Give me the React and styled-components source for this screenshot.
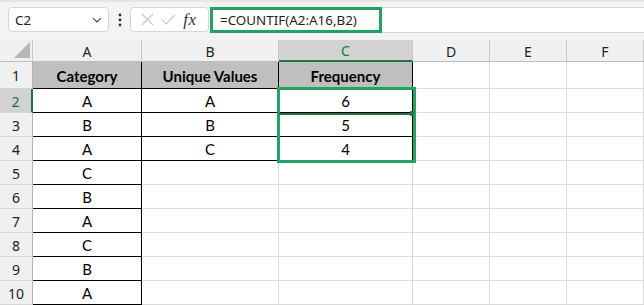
import React from "react";
import styled, { createGlobalStyle } from "styled-components";

const Global = createGlobalStyle`
  html, body { margin: 0; padding: 0; background: #ffffff; overflow: hidden; }
  * { box-sizing: border-box; }
`;

const UI_FONT = `"Noto Sans", "Open Sans", sans-serif`;
const CELL_FONT = `Lato, "Noto Sans", sans-serif`;
const GREEN = "#21a366";
const DARK_GREEN = "#217346";
const GRID = "#dadada";
const BLACK = "#000000";

const Page = styled.div`
  width: 644px;
  height: 305px;
  overflow: hidden;
  display: flex;
  flex-direction: column;
`;

const Toolbar = styled.div`
  height: 40px;
  flex: none;
  display: flex;
  align-items: flex-start;
  padding: 5px 0 0 8px;
  background: #f3f3f3;
  border-top: 2px solid #e4e4e4;
`;

const NameBox = styled.div`
  width: 101px;
  height: 25px;
  background: #ffffff;
  border: 1px solid #d6d6d6;
  border-radius: 4px;
  display: flex;
  align-items: center;
  justify-content: space-between;
  padding: 0 5px 0 6px;
  font-family: ${UI_FONT};
  font-size: 13.4px;
  color: #1f1f1f;
`;

const DotsWrap = styled.div`
  width: 21px;
  height: 25px;
  display: flex;
  align-items: center;
  justify-content: center;
`;

const IconsBox = styled.div`
  width: 79px;
  height: 25px;
  margin-right: 1px;
  background: #ffffff;
  border: 1px solid #d6d6d6;
  border-radius: 4px;
  display: flex;
  align-items: center;
  padding-left: 6px;
`;

const IconSlot = styled.div`
  width: ${(p) => p.$w}px;
  height: 23px;
  display: flex;
  align-items: center;
  justify-content: center;
`;

const Fx = styled.span`
  font-family: "Liberation Serif", "DejaVu Serif", serif;
  font-style: italic;
  font-size: 17px;
  color: #333333;
  letter-spacing: 0.5px;
  line-height: 1;
  margin-top: -1px;
`;

const FormulaBar = styled.div`
  flex: 1;
  height: 26px;
  background: #ffffff;
  border-top: 1px solid #d6d6d6;
  border-bottom: 1px solid #d6d6d6;
  display: flex;
  align-items: stretch;
`;

const FormulaHighlight = styled.div`
  width: 172px;
  margin-top: -1px;
  margin-bottom: -1px;
  border: 3px solid ${GREEN};
  display: flex;
  align-items: center;
  padding-left: 7px;
  font-family: ${UI_FONT};
  font-size: 13.4px;
  color: #1f1f1f;
  white-space: nowrap;
`;

const Sheet = styled.div`
  position: relative;
  flex: 1;
  display: grid;
  grid-template-columns: 33px 109px 137px 134px 77px 77px 1fr;
  grid-template-rows: 22px 27px repeat(9, 24px);
  background: #ffffff;
`;

const Corner = styled.div`
  background: #f0f0f0;
  border-right: 1px solid #c8c8c8;
  border-bottom: 1px solid #bdbdbd;
  display: flex;
  align-items: flex-end;
  justify-content: flex-end;
  padding: 0 2px 3px 0;
`;

const ColHead = styled.div`
  background: ${(p) => (p.$active ? "#d2d2d2" : "#f0f0f0")};
  color: ${(p) => (p.$active ? DARK_GREEN : "#222222")};
  border-right: 1px solid #c8c8c8;
  border-bottom: ${(p) => (p.$active ? `2px solid ${DARK_GREEN}` : "1px solid #bdbdbd")};
  display: flex;
  align-items: center;
  justify-content: center;
  font-family: ${UI_FONT};
  font-size: 14px;
  padding-top: 1px;
`;

const RowHead = styled.div`
  background: ${(p) => (p.$active ? "#d2d2d2" : "#f0f0f0")};
  color: ${(p) => (p.$active ? DARK_GREEN : "#222222")};
  border-right: ${(p) => (p.$active ? `2px solid ${DARK_GREEN}` : "1px solid #b4b4b4")};
  border-bottom: 1px solid #d6d6d6;
  display: flex;
  align-items: center;
  justify-content: center;
  font-family: ${UI_FONT};
  font-size: 14px;
  padding-top: 1px;
`;

const Cell = styled.div`
  background: ${(p) => (p.$head ? "#bfbfbf" : "#ffffff")};
  border-right: 1px solid ${(p) => p.$line};
  border-bottom: 1px solid ${(p) => p.$line};
  display: flex;
  align-items: center;
  justify-content: center;
  font-family: ${CELL_FONT};
  font-size: 15px;
  font-weight: ${(p) => (p.$head ? 700 : 400)};
  color: #000000;
  padding-top: 1px;
`;

const Selection = styled.div`
  position: absolute;
  left: 277px;
  top: 47px;
  width: 139px;
  height: 76px;
  border: 3px solid ${GREEN};
  pointer-events: none;
`;

const ActiveEdge = styled.div`
  position: absolute;
  left: 279px;
  top: 73px;
  width: 133px;
  height: 2px;
  background: ${DARK_GREEN};
  pointer-events: none;
`;

const FillHandle = styled.div`
  position: absolute;
  left: 410px;
  top: 71px;
  width: 4px;
  height: 5px;
  background: ${DARK_GREEN};
  pointer-events: none;
`;

const columns = ["A", "B", "C", "D", "E", "F"];

const colA = ["Category", "A", "B", "A", "C", "B", "A", "C", "B", "A"];
const colB = ["Unique Values", "A", "B", "C"];
const colC = ["Frequency", "6", "5", "4"];

function lineFor(colIdx, rowIdx) {
  if (colIdx === 0) return BLACK;
  if ((colIdx === 1 || colIdx === 2) && rowIdx < 4) return BLACK;
  return GRID;
}

function valueFor(colIdx, rowIdx) {
  if (colIdx === 0) return colA[rowIdx] || "";
  if (colIdx === 1) return colB[rowIdx] || "";
  if (colIdx === 2) return colC[rowIdx] || "";
  return "";
}

export default function App() {
  const rows = Array.from({ length: 10 }, (_, i) => i);
  return (
    <Page>
      <Global />
      <Toolbar>
        <NameBox>
          <span>C2</span>
          <svg width="12" height="12" viewBox="0 0 12 12">
            <path d="M2 4.2 L6 8 L10 4.2" fill="none" stroke="#444" strokeWidth="1.1" />
          </svg>
        </NameBox>
        <DotsWrap>
          <svg width="4" height="14" viewBox="0 0 4 14">
            <circle cx="2" cy="2" r="1.4" fill="#333" />
            <circle cx="2" cy="7" r="1.4" fill="#333" />
            <circle cx="2" cy="12" r="1.4" fill="#333" />
          </svg>
        </DotsWrap>
        <IconsBox>
          <IconSlot $w={20}>
            <svg width="13" height="13" viewBox="0 0 13 13">
              <path d="M1 1 L12 12 M12 1 L1 12" stroke="#c4c4c4" strokeWidth="1.1" fill="none" />
            </svg>
          </IconSlot>
          <IconSlot $w={22}>
            <svg width="15" height="11" viewBox="0 0 15 11">
              <path d="M1 5.5 L5 10 L14 1" stroke="#c4c4c4" strokeWidth="1.1" fill="none" />
            </svg>
          </IconSlot>
          <IconSlot $w={22}>
            <Fx>fx</Fx>
          </IconSlot>
        </IconsBox>
        <FormulaBar>
          <FormulaHighlight>=COUNTIF(A2:A16,B2)</FormulaHighlight>
        </FormulaBar>
      </Toolbar>
      <Sheet>
        <Corner>
          <svg width="16" height="16" viewBox="0 0 16 16">
            <path d="M16 0 L16 16 L0 16 Z" fill="#b8b8b8" />
          </svg>
        </Corner>
        {columns.map((c) => (
          <ColHead key={c} $active={c === "C"}>
            {c}
          </ColHead>
        ))}
        {rows.map((r) => (
          <React.Fragment key={r}>
            <RowHead $active={r === 1}>{r + 1}</RowHead>
            {columns.map((c, ci) => (
              <Cell key={c} $line={lineFor(ci, r)} $head={r === 0 && ci < 3}>
                {valueFor(ci, r)}
              </Cell>
            ))}
          </React.Fragment>
        ))}
        <Selection />
        <ActiveEdge />
        <FillHandle />
      </Sheet>
    </Page>
  );
}
